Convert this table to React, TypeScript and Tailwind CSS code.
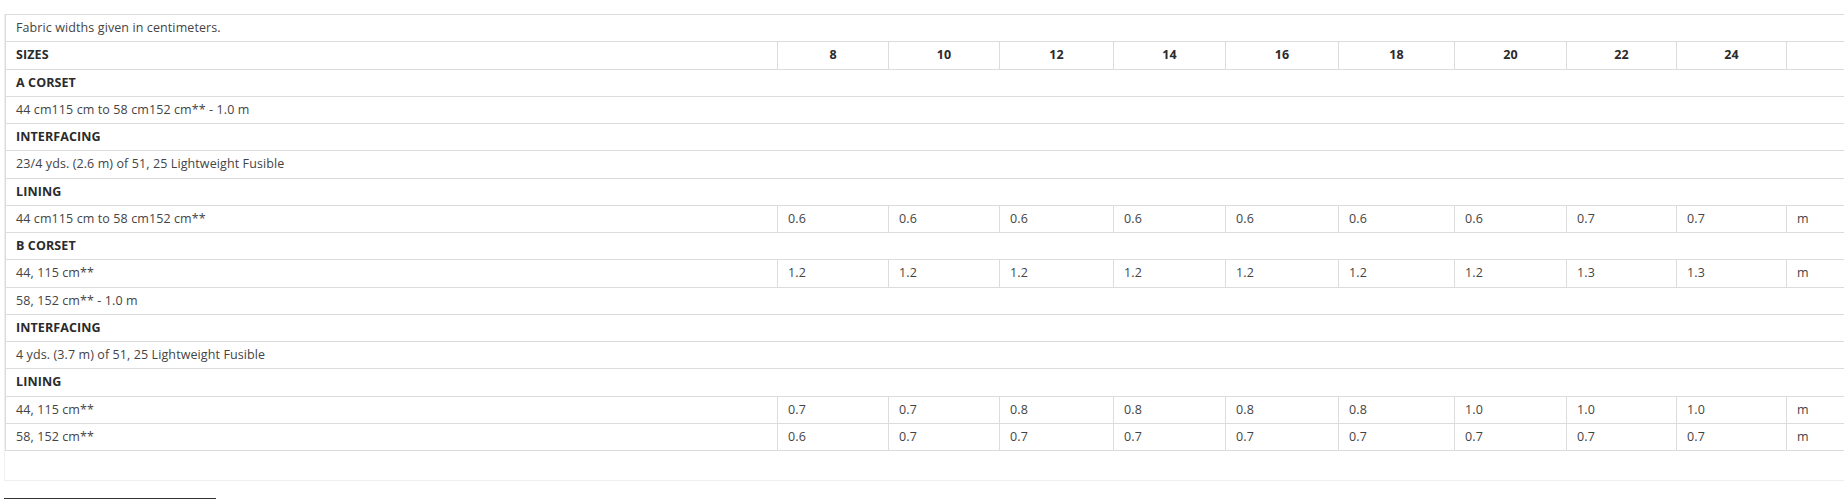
const SIZES = ['8', '10', '12', '14', '16', '18', '20', '22', '24']
const COLS = [772, 111, 111, 114, 112, 113, 116, 112, 110, 110, 112]

type Row =
  | { kind: 'head'; text: string }
  | { kind: 'text'; text: string }
  | { kind: 'data'; text: string; values: string[] }

const ROWS: Row[] = [
  { kind: 'head', text: 'A CORSET' },
  { kind: 'text', text: '44 cm115 cm to 58 cm152 cm** - 1.0 m' },
  { kind: 'head', text: 'INTERFACING' },
  { kind: 'text', text: '23/4 yds. (2.6 m) of 51, 25 Lightweight Fusible' },
  { kind: 'head', text: 'LINING' },
  { kind: 'data', text: '44 cm115 cm to 58 cm152 cm**', values: ['0.6', '0.6', '0.6', '0.6', '0.6', '0.6', '0.6', '0.7', '0.7'] },
  { kind: 'head', text: 'B CORSET' },
  { kind: 'data', text: '44, 115 cm**', values: ['1.2', '1.2', '1.2', '1.2', '1.2', '1.2', '1.2', '1.3', '1.3'] },
  { kind: 'text', text: '58, 152 cm** - 1.0 m' },
  { kind: 'head', text: 'INTERFACING' },
  { kind: 'text', text: '4 yds. (3.7 m) of 51, 25 Lightweight Fusible' },
  { kind: 'head', text: 'LINING' },
  { kind: 'data', text: '44, 115 cm**', values: ['0.7', '0.7', '0.8', '0.8', '0.8', '0.8', '1.0', '1.0', '1.0'] },
  { kind: 'data', text: '58, 152 cm**', values: ['0.6', '0.7', '0.7', '0.7', '0.7', '0.7', '0.7', '0.7', '0.7'] },
]

const cell = 'border border-[#dcdcdc] px-[10px] py-[6px] leading-[14.25px] whitespace-nowrap'

export default function App() {
  return (
    <div className="min-h-screen bg-white pt-[14px] font-['Open_Sans',sans-serif] text-[12.5px] tracking-[0.1px] text-[#444]">
      <div className="ml-1 overflow-hidden">
        <div className="w-[1900px] border border-t-0 border-[#efefef] pb-[29px]">
          <table className="table-fixed border-collapse" style={{ width: COLS.reduce((a, b) => a + b, 0) }}>
            <colgroup>
              {COLS.map((w, i) => <col key={i} style={{ width: w }} />)}
            </colgroup>
            <tbody>
              <tr>
                <td colSpan={11} className={cell}>Fabric widths given in centimeters.</td>
              </tr>
              <tr className="font-bold text-[#2b2b2b]">
                <td className={cell}>SIZES</td>
                {SIZES.map(s => <td key={s} className={`${cell} text-center`}>{s}</td>)}
                <td className={cell}></td>
              </tr>
              {ROWS.map((r, i) => {
                if (r.kind === 'data') {
                  return (
                    <tr key={i}>
                      <td className={cell}>{r.text}</td>
                      {r.values.map((v, j) => <td key={j} className={cell}>{v}</td>)}
                      <td className={cell}>m</td>
                    </tr>
                  )
                }
                return (
                  <tr key={i} className={r.kind === 'head' ? 'font-bold text-[#2b2b2b]' : ''}>
                    <td colSpan={11} className={cell}>{r.text}</td>
                  </tr>
                )
              })}
            </tbody>
          </table>
        </div>
      </div>
      <div className="ml-1 mt-[17px] h-px w-[212px] bg-[#333]" />
    </div>
  )
}
